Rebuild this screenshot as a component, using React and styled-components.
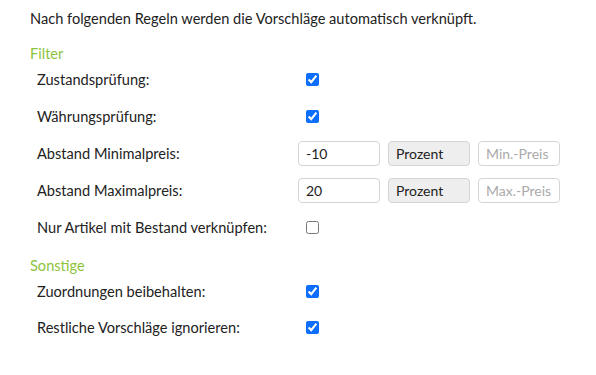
import styled, { createGlobalStyle } from 'styled-components';

const GlobalStyle = createGlobalStyle`
	body {
		margin: 0;
		background: #fff;
		font-family: Lato, "Noto Sans", sans-serif;
		font-size: 14.6px;
		color: #222;
	}
`;

const Page = styled.div`
	padding: 9px 30px 20px 30px;
`;

const Intro = styled.p`
	margin: 0 0 17px 0;
	line-height: 20px;
`;

const SectionTitle = styled.h3`
	margin: ${p => p.$spaced ? '12px' : '0'} 0 -1px 0;
	font-size: 14.6px;
	font-weight: normal;
	line-height: 16px;
	color: #8cc43c;
`;

const Rows = styled.div`
	display: grid;
	grid-template-columns: 261px auto;
	grid-auto-rows: ${p => p.$h || 37}px;
	padding-left: 7px;
`;

const Label = styled.div`
	display: flex;
	align-items: center;
`;

const Controls = styled.div`
	display: flex;
	align-items: center;
	gap: 8px;
`;

const Check = styled.input.attrs({ type: 'checkbox' })`
	width: 13px;
	height: 13px;
	margin: 0 0 0 8px;
	accent-color: #0d6efd;
`;

const Field = styled.div`
	box-sizing: border-box;
	width: 82px;
	height: 25px;
	border: 1px solid #d4d4d4;
	border-radius: 4px;
	padding: 0 7px;
	display: flex;
	align-items: center;
	font-size: 14px;
	color: ${p => p.$placeholder ? '#aaa' : '#222'};
	background: ${p => p.$addon ? '#eeeeee' : '#fff'};
`;

const rules = {
	filter: [
		{ label: 'Zustandsprüfung:', checked: true },
		{ label: 'Währungsprüfung:', checked: true },
		{ label: 'Abstand Minimalpreis:', value: '-10', placeholder: 'Min.-Preis' },
		{ label: 'Abstand Maximalpreis:', value: '20', placeholder: 'Max.-Preis' },
		{ label: 'Nur Artikel mit Bestand verknüpfen:', checked: false },
	],
	other: [
		{ label: 'Zuordnungen beibehalten:', checked: true },
		{ label: 'Restliche Vorschläge ignorieren:', checked: true },
	],
};

function RuleRow({ rule }) {
	return (
		<>
			<Label>{rule.label}</Label>
			<Controls>
				{rule.value !== undefined ? (
					<>
						<Field>{rule.value}</Field>
						<Field $addon>Prozent</Field>
						<Field $placeholder>{rule.placeholder}</Field>
					</>
				) : (
					<Check defaultChecked={rule.checked} />
				)}
			</Controls>
		</>
	);
}

export default function App() {
	return (
		<Page>
			<GlobalStyle />
			<Intro>Nach folgenden Regeln werden die Vorschläge automatisch verknüpft.</Intro>
			<SectionTitle>Filter</SectionTitle>
			<Rows>
				{rules.filter.map(r => <RuleRow key={r.label} rule={r} />)}
			</Rows>
			<SectionTitle $spaced>Sonstige</SectionTitle>
			<Rows $h={36}>
				{rules.other.map(r => <RuleRow key={r.label} rule={r} />)}
			</Rows>
		</Page>
	);
}
